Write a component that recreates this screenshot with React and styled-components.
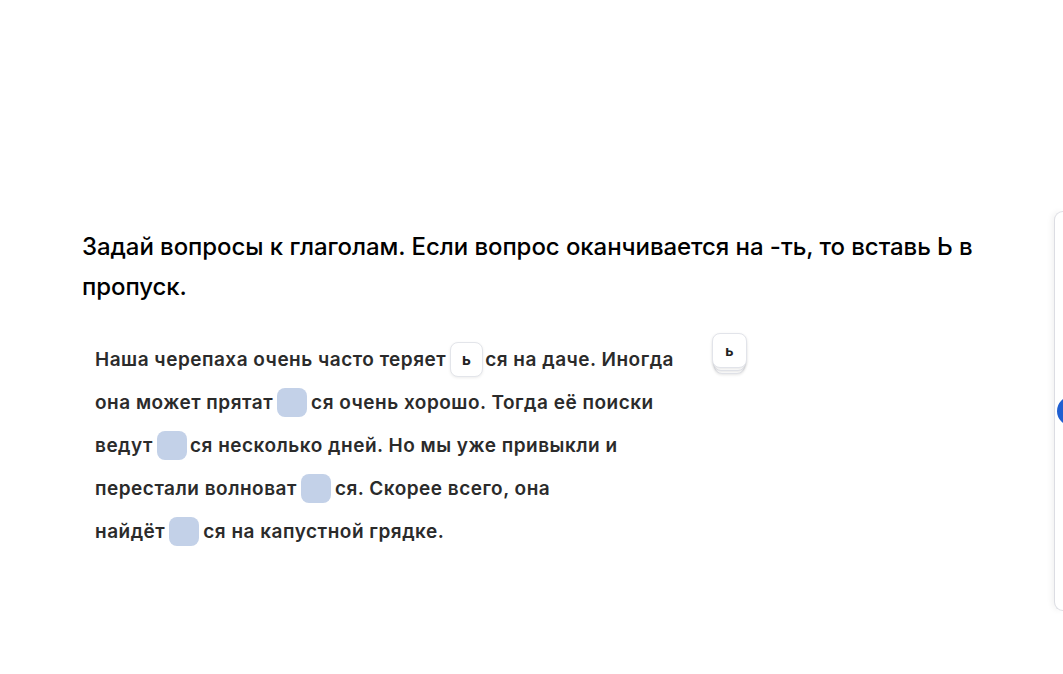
import React from "react";
import styled, { createGlobalStyle } from "styled-components";

const Global = createGlobalStyle`
  html, body { margin: 0; padding: 0; background: #ffffff; }
  body { font-family: Inter, "Open Sans", "Liberation Sans", sans-serif; overflow: hidden; }
`;

const Page = styled.div`
  display: flex;
  width: 1063px;
  height: 674px;
  overflow: hidden;
`;

const Main = styled.main`
  flex: 1;
  padding: 227px 0 0 82px;
  box-sizing: border-box;
`;

const Heading = styled.h1`
  margin: 0;
  font-size: 24px;
  line-height: 40px;
  font-weight: 500;
  color: #000;
  letter-spacing: -0.07px;
`;

const Exercise = styled.section`
  display: flex;
  align-items: flex-start;
  gap: 38px;
  margin-top: 31px;
  padding-left: 13px;
`;

const Passage = styled.div`
  display: flex;
  flex-direction: column;
  width: 579px;
`;

const Line = styled.div`
  display: flex;
  align-items: center;
  height: 43px;
  font-size: 19px;
  font-weight: 600;
  color: #2b2b2b;
  letter-spacing: 0.5px;
  white-space: pre;
`;

const Blank = styled.span`
  display: inline-block;
  width: 30px;
  height: 29px;
  border-radius: 8px;
  background: #c3d1e8;
  margin: 0 ${(p) => (p.$tight ? "3px" : "4px")} 0 4px;
`;

const Chip = styled.span`
  display: inline-flex;
  align-items: center;
  justify-content: center;
  width: 34px;
  height: 35px;
  box-sizing: border-box;
  border-radius: 8px;
  background: #fff;
  border: 1px solid #e3e5ea;
  box-shadow: 0 1px 3px rgba(0, 0, 0, 0.08);
  margin: 0 2px 0 4px;
  font-size: 15px;
  font-weight: 700;
  color: #222;
`;

const Bank = styled.div`
  position: relative;
  width: 35px;
  height: 42px;
  margin-top: -5px;
`;

const Card = styled.div`
  position: absolute;
  left: ${(p) => p.$inset}px;
  right: ${(p) => p.$inset}px;
  top: ${(p) => p.$top}px;
  height: 35px;
  box-sizing: border-box;
  border-radius: 8px;
  background: #fff;
  border: 1px solid #e2e4ea;
  box-shadow: 0 1px 3px rgba(0, 0, 0, 0.1);
  display: flex;
  align-items: center;
  justify-content: center;
  font-size: 14px;
  font-weight: 700;
  color: #222;
`;

const Aside = styled.aside`
  flex: none;
  width: 9px;
  height: 400px;
  margin-top: 211px;
  box-sizing: border-box;
  border: 1px solid #dcdde3;
  border-right: none;
  border-radius: 16px 0 0 16px;
  box-shadow: -2px 0 6px rgba(0, 0, 0, 0.06);
  background: #fff;
  display: flex;
  align-items: center;
  overflow: hidden;
`;

const Dot = styled.span`
  flex: none;
  width: 30px;
  height: 30px;
  border-radius: 50%;
  background: #1f5fd1;
  margin-left: 2px;
`;

export default function App() {
  return (
    <>
      <Global />
      <Page>
        <Main>
          <Heading>
            Задай вопросы к глаголам. Если вопрос оканчивается на -ть, то вставь Ь в
            <br />
            пропуск.
          </Heading>
          <Exercise>
            <Passage>
              <Line>
                <span>Наша черепаха очень часто теряет</span>
                <Chip>ь</Chip>
                <span>ся на даче. Иногда</span>
              </Line>
              <Line>
                <span>она может прятат</span>
                <Blank />
                <span>ся очень хорошо. Тогда её поиски</span>
              </Line>
              <Line>
                <span>ведут</span>
                <Blank $tight />
                <span>ся несколько дней. Но мы уже привыкли и</span>
              </Line>
              <Line>
                <span>перестали волноват</span>
                <Blank />
                <span>ся. Скорее всего, она</span>
              </Line>
              <Line>
                <span>найдёт</span>
                <Blank />
                <span>ся на капустной грядке.</span>
              </Line>
            </Passage>
            <Bank>
              <Card $inset={2} $top={6} />
              <Card $inset={1} $top={3} />
              <Card $inset={0} $top={0}>ь</Card>
            </Bank>
          </Exercise>
        </Main>
        <Aside>
          <Dot />
        </Aside>
      </Page>
    </>
  );
}
